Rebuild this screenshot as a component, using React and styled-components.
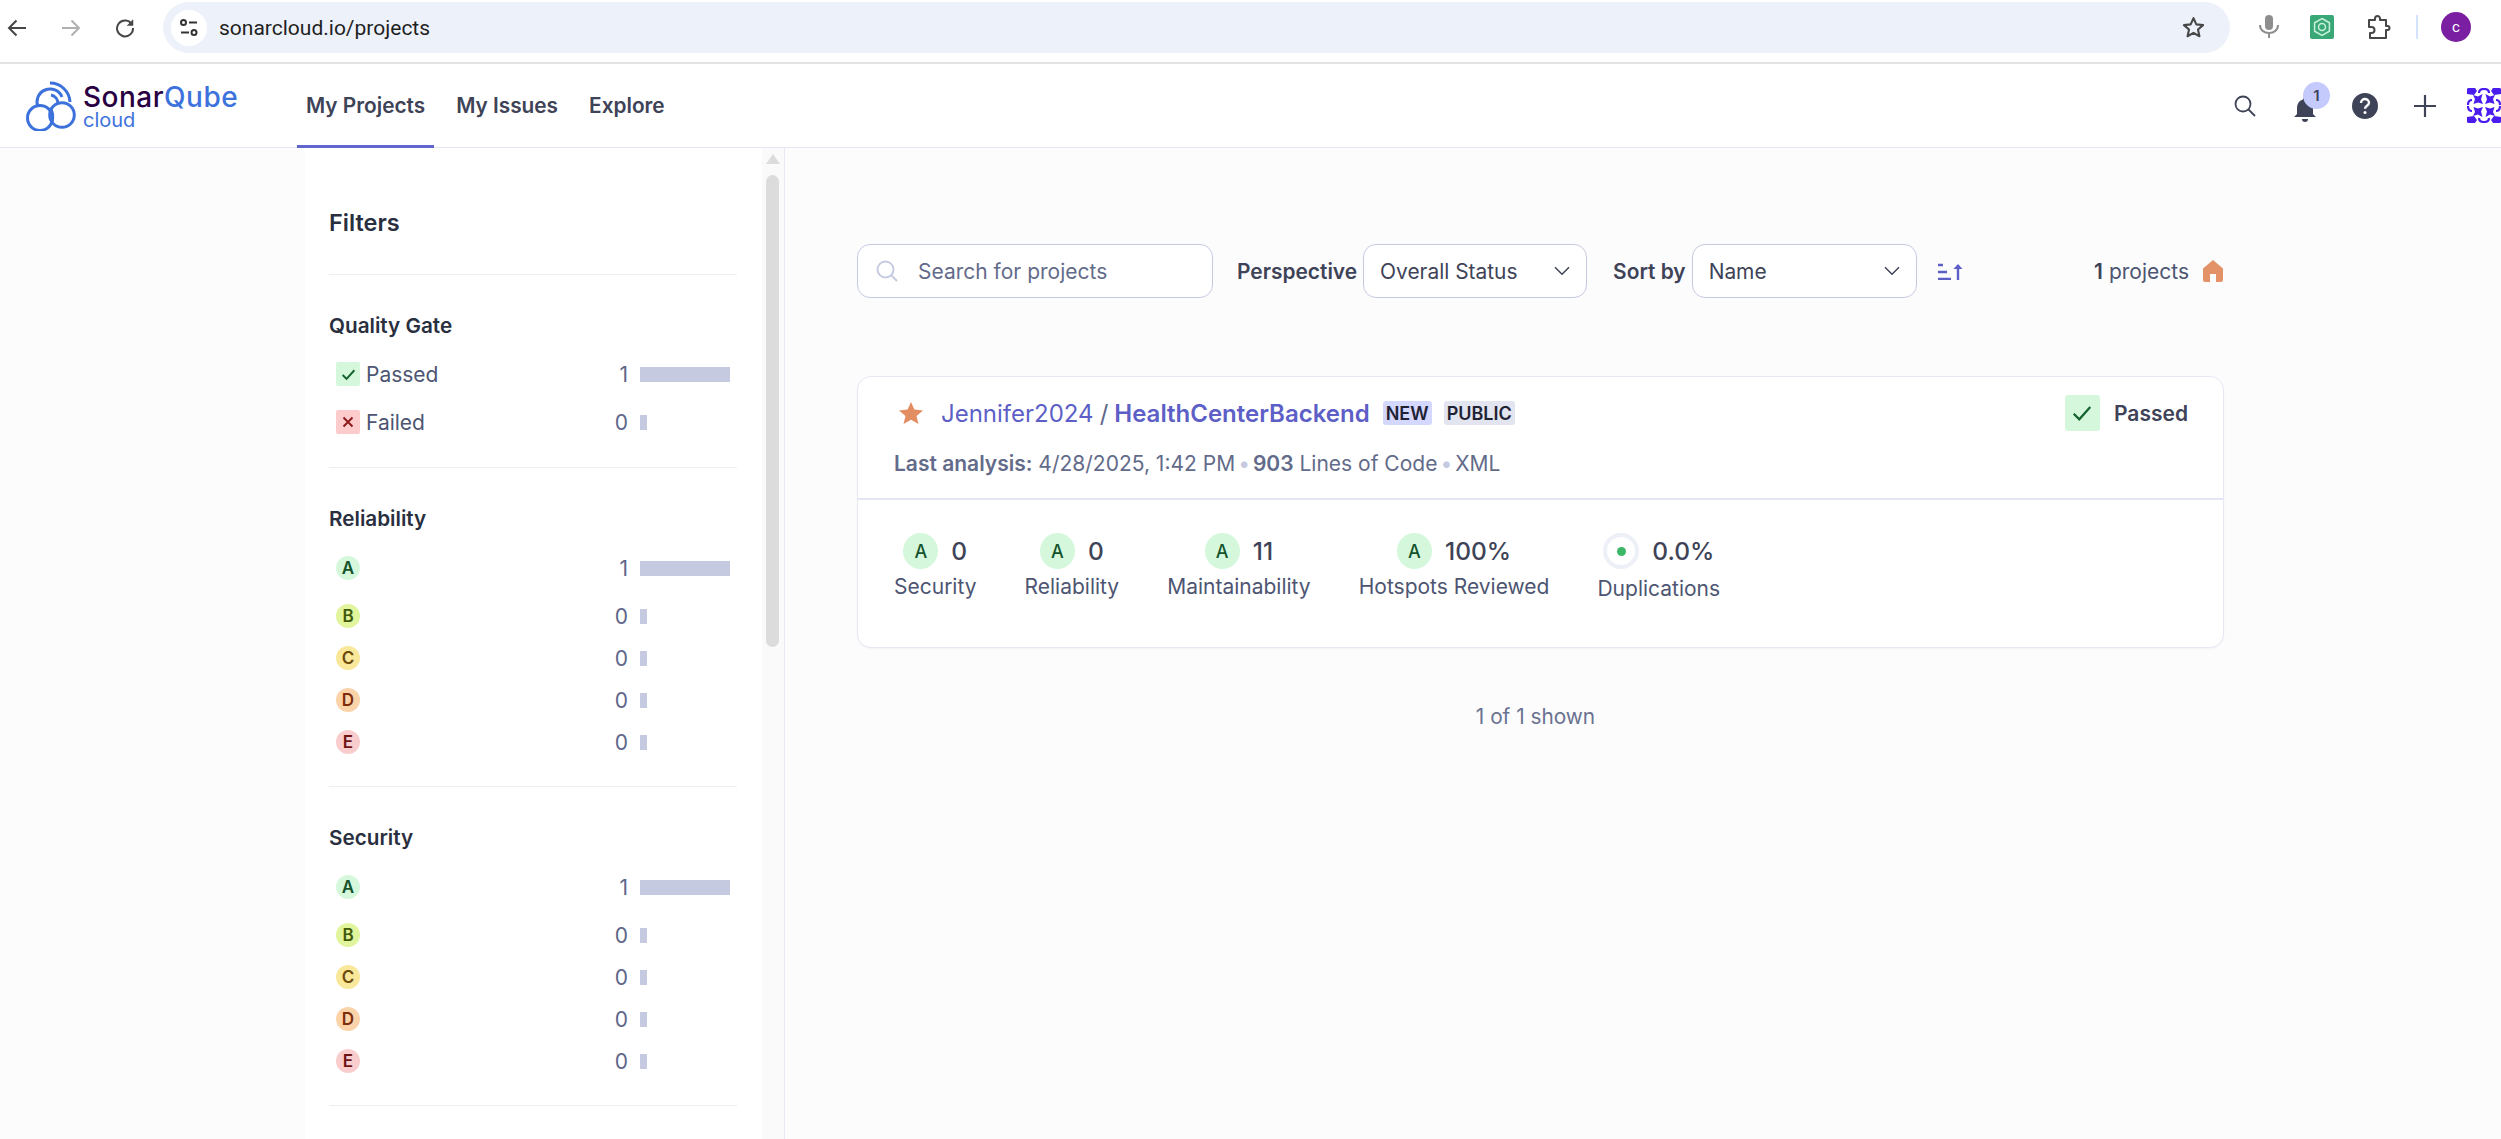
import React from "react";
import styled, { createGlobalStyle } from "styled-components";

const GlobalStyle = createGlobalStyle`
  html, body {
    margin: 0;
    height: 1139px;
    overflow: hidden;
    background: #fcfcfd;
    font-family: Inter, "Liberation Sans", sans-serif;
    color: #3e4357;
  }
  * { box-sizing: border-box; }
`;

const Page = styled.div`
  width: 2501px;
  height: 1139px;
  display: flex;
  flex-direction: column;
  overflow: hidden;
`;

/* browser chrome */
const BrowserBar = styled.div`
  height: 64px;
  flex: none;
  background: #fff;
  border-bottom: 2px solid #e3e3e3;
  display: flex;
  align-items: flex-start;
`;

const NavButton = styled.div`
  width: 54px;
  height: 56px;
  flex: none;
  display: flex;
  align-items: center;
  justify-content: center;
  margin-left: ${p => p.$first ? "-10px" : "0"};
`;

const UrlBar = styled.div`
  margin: 2px 0 0 11px;
  width: 2067px;
  height: 51px;
  border-radius: 26px;
  background: #edf2fa;
  display: flex;
  align-items: center;
  padding: 0 24px 0 8px;
`;

const SiteIcon = styled.div`
  width: 36px;
  height: 36px;
  border-radius: 50%;
  background: #fff;
  display: flex;
  align-items: center;
  justify-content: center;
`;

const UrlText = styled.span`
  margin-left: 12px;
  font-family: Roboto, sans-serif;
  font-size: 21px;
  color: #1f1f1f;
  flex: 1;
`;

const ChromeTools = styled.div`
  margin-left: 29px;
  height: 54px;
  display: flex;
  align-items: center;
`;

const ExtensionIcon = styled.div`
  width: 24px;
  height: 24px;
  border-radius: 2px;
  background: #3aa876;
  display: flex;
  align-items: center;
  justify-content: center;
  margin: 0 33px 0 31px;
`;

const ToolSeparator = styled.div`
  width: 2px;
  height: 24px;
  background: #d3e3fd;
  margin: 0 23px 0 24px;
`;

const ProfileBubble = styled.div`
  width: 30px;
  height: 30px;
  border-radius: 50%;
  background: #7b1fa2;
  color: #fff;
  font-family: Roboto, sans-serif;
  font-size: 15px;
  display: flex;
  align-items: center;
  justify-content: center;
`;

/* app header */
const Header = styled.header`
  height: 84px;
  flex: none;
  background: #fff;
  border-bottom: 1px solid #e4e6f0;
  display: flex;
  align-items: stretch;
`;

const LogoBox = styled.div`
  width: 297px;
  padding-left: 26px;
  flex: none;
  display: flex;
  align-items: center;
  gap: 5px;
`;

const LogoText = styled.div`
  display: flex;
  flex-direction: column;
  padding-top: 2px;
`;

const LogoWord = styled.div`
  font-size: 28px;
  line-height: 27px;
  font-weight: 500;
  letter-spacing: 0.5px;
  color: #290042;
  span { color: #3d72dc; }
`;

const LogoSub = styled.div`
  font-size: 20px;
  line-height: 18px;
  color: #3d72dc;
`;

const NavTabs = styled.nav`
  display: flex;
  gap: 13px;
`;

const NavTab = styled.a`
  padding: 2px 9px 0;
  font-size: 20.8px;
  font-weight: 600;
  color: #3e4357;
  display: flex;
  align-items: center;
  border-bottom: 3px solid ${p => p.$active ? "#6166cc" : "transparent"};
  margin-bottom: -1px;
`;

const HeaderTools = styled.div`
  margin-left: auto;
  display: flex;
  align-items: center;
  height: 100%;
`;

const HeaderIcon = styled.div`
  width: 60px;
  height: 40px;
  display: flex;
  align-items: center;
  justify-content: center;
  position: relative;
`;

const CountBadge = styled.span`
  position: absolute;
  top: -4px;
  right: 5px;
  width: 27px;
  height: 27px;
  border-radius: 50%;
  background: #c5cafd;
  color: #3e4357;
  font-size: 15px;
  font-weight: 600;
  display: flex;
  align-items: center;
  justify-content: center;
`;

const Identicon = styled.div`
  width: 34px;
  height: 35px;
  margin-left: 12px;
  display: flex;
`;

/* body */
const Body = styled.div`
  flex: 1;
  min-height: 0;
  display: flex;
  padding-left: 305px;
`;

const Sidebar = styled.aside`
  width: 480px;
  flex: none;
  display: flex;
  background: #fff;
  border-right: 1px solid #e6e8f4;
`;

const SidebarInner = styled.div`
  width: 457px;
  padding: 0 25px 0 24px;
  flex: none;
`;

const ScrollTrack = styled.div`
  width: 22px;
  background: #fafafa;
  padding: 6px 5px 0 4px;
  display: flex;
  flex-direction: column;
  align-items: center;
`;

const ScrollArrow = styled.div`
  width: 0;
  height: 0;
  border-left: 7px solid transparent;
  border-right: 7px solid transparent;
  border-bottom: 10px solid #dcdcdc;
`;

const ScrollThumb = styled.div`
  width: 13px;
  height: 472px;
  margin-top: 11px;
  border-radius: 7px;
  background: #dcdcdc;
`;

const FiltersTitle = styled.h2`
  margin: 0;
  padding: 60px 0 36px;
  font-size: 23.5px;
  line-height: 30px;
  font-weight: 600;
  color: #2a2f40;
  border-bottom: 1px solid #eeeff4;
`;

const FilterSection = styled.section`
  padding: 37px 0 ${p => p.$pb || 23}px;
  border-bottom: 1px solid #eeeff4;
`;

const SectionTitle = styled.h3`
  margin: 0 0 ${p => p.$gap || 14}px;
  font-size: 20.7px;
  line-height: 28px;
  font-weight: 600;
  color: #2a2f40;
`;

const FacetRow = styled.div`
  height: 42px;
  margin-top: ${p => p.$spaced ? 6 : 0}px;
  padding: 0 7px;
  display: flex;
  align-items: center;
`;

const StatusBox = styled.span`
  width: 24px;
  height: 24px;
  border-radius: 2px;
  background: ${p => p.$ok ? "#d5f8dc" : "#fccccc"};
  display: flex;
  align-items: center;
  justify-content: center;
`;

const FacetLabel = styled.span`
  margin-left: 6px;
  font-size: 21px;
  color: #4d5572;
`;

const RATING = {
  A: ["#d5f8dc", "#14532d"],
  B: ["#e0f59c", "#3f5a08"],
  C: ["#f9e79a", "#6b4a09"],
  D: ["#fad3a8", "#7c2d0a"],
  E: ["#f9cdcd", "#6f1414"],
};

const RatingDot = styled.span`
  width: 24px;
  height: 24px;
  border-radius: 50%;
  background: ${p => RATING[p.$r][0]};
  color: ${p => RATING[p.$r][1]};
  font-size: 17px;
  font-weight: 600;
  display: flex;
  align-items: center;
  justify-content: center;
`;

const FacetCount = styled.span`
  margin-left: auto;
  font-size: 21px;
  color: #5d6689;
`;

const BarSlot = styled.div`
  width: 90px;
  margin-left: 12px;
  flex: none;
`;

const FacetBar = styled.div`
  height: 15px;
  background: #c5cae0;
`;

const Content = styled.main`
  flex: 1;
  min-width: 0;
  padding: 96px 0 0 72px;
`;

const Toolbar = styled.div`
  width: 1367px;
  height: 54px;
  display: flex;
  align-items: center;
`;

const SearchBox = styled.div`
  width: 356px;
  height: 54px;
  border: 1.5px solid #c5cae0;
  border-radius: 13px;
  background: #fff;
  display: flex;
  align-items: center;
  padding-left: 18px;
  gap: 20px;
  font-size: 21px;
  color: #636b8a;
`;

const ToolLabel = styled.span`
  margin-left: ${p => p.$ml}px;
  font-size: 20.9px;
  font-weight: 600;
  color: #3e4357;
`;

const SelectBox = styled.div`
  width: ${p => p.$w}px;
  height: 54px;
  margin-left: 6px;
  border: 1.5px solid #c5cae0;
  border-radius: 13px;
  background: #fff;
  display: flex;
  align-items: center;
  justify-content: space-between;
  padding: 0 16px;
  font-size: 20.9px;
  color: #3e4357;
`;

const SortButton = styled.div`
  margin-left: 21px;
  display: flex;
`;

const ProjectCount = styled.div`
  margin-left: auto;
  display: flex;
  align-items: center;
  gap: 13px;
  font-size: 21px;
  color: #4d5572;
  strong { font-weight: 600; color: #3e4357; }
`;

const Card = styled.article`
  width: 1367px;
  height: 272px;
  margin-top: 78px;
  background: #fff;
  border: 1px solid #e6e8f4;
  border-radius: 14px;
  box-shadow: 0 1px 2px rgba(29, 33, 47, 0.04);
`;

const CardHead = styled.div`
  padding: 18px 35px 18px 36px;
  border-bottom: 2px solid #e4e6f5;
  box-sizing: content-box;
  height: 85px;
`;

const TitleRow = styled.div`
  height: 36px;
  display: flex;
  align-items: center;
  padding-left: 5px;
`;

const ProjectTitle = styled.div`
  margin-left: 18px;
  font-size: 24px;
  color: #5d5fc7;
  b { font-weight: 600; }
  i { font-style: normal; color: #5d6689; margin: 0 6px; }
`;

const Tag = styled.span`
  height: 24px;
  margin-left: ${p => p.$ml}px;
  padding: 0 3px;
  border-radius: 3px;
  background: ${p => p.$new ? "#d4d7fe" : "#e2e5f0"};
  color: #1f2233;
  font-size: 18px;
  font-weight: 600;
  display: flex;
  align-items: center;
`;

const GateStatus = styled.div`
  margin-left: auto;
  display: flex;
  align-items: center;
  gap: 14px;
  font-size: 21px;
  font-weight: 600;
  color: #3e4357;
`;

const GateBox = styled.span`
  width: 35px;
  height: 36px;
  border-radius: 3px;
  background: #d5f8dc;
  display: flex;
  align-items: center;
  justify-content: center;
`;

const MetaRow = styled.div`
  margin-top: 18px;
  line-height: 30px;
  font-size: 21px;
  color: #636b8a;
  b { font-weight: 600; }
  i { font-style: normal; color: #c5cae0; margin: 0 3px; }
`;

const Measures = styled.div`
  padding: 33px 0 0 36px;
  display: flex;
  gap: 48px;
`;

const Measure = styled.div`
  display: flex;
  flex-direction: column;
  align-items: center;
`;

const MeasureTop = styled.div`
  height: 36px;
  display: flex;
  align-items: center;
  gap: 13px;
  font-size: 24.5px;
  font-weight: 500;
  color: #3e4357;
`;

const MeasureRating = styled.span`
  width: 35px;
  height: 36px;
  border-radius: 50%;
  background: #d5f8dc;
  color: #14532d;
  font-size: 18px;
  font-weight: 500;
  display: flex;
  align-items: center;
  justify-content: center;
`;

const DupRing = styled.span`
  width: 36px;
  height: 36px;
  border-radius: 50%;
  border: 4px solid #eef0f8;
  background: #fff;
  display: flex;
  align-items: center;
  justify-content: center;
  &::after {
    content: "";
    width: 9px;
    height: 9px;
    border-radius: 50%;
    background: #3cb767;
  }
`;

const MeasureLabel = styled.span`
  margin-top: ${p => p.$low ? 6 : 4}px;
  line-height: 28px;
  font-size: 21px;
  color: #4d5572;
`;

const ShownCount = styled.div`
  width: 1367px;
  margin-top: 54px;
  padding-right: 10px;
  line-height: 30px;
  text-align: center;
  font-size: 20.8px;
  color: #6a7290;
`;

const facetRows = [
  { r: "A", n: 1 },
  { r: "B", n: 0 },
  { r: "C", n: 0 },
  { r: "D", n: 0 },
  { r: "E", n: 0 },
];

const barWidth = n => (n > 0 ? "100%" : "7px");

const Check = ({ size, w }) => (
  <svg width={size} height={size} viewBox="0 0 16 16" fill="none" stroke="#14632f" strokeWidth={w}>
    <path d="M2.5 8.5l3.7 3.7 7.3-8.2" />
  </svg>
);

const Chevron = () => (
  <svg width="16" height="10" viewBox="0 0 16 10" fill="none" stroke="#3e4357" strokeWidth="1.5">
    <path d="M1 1.2l7 7 7-7" />
  </svg>
);

const SonarLogo = () => (
  <svg width="52" height="50" viewBox="26 81 52 50" fill="none" stroke="#3d72dc" strokeWidth="3">
    <circle cx="40" cy="118" r="12.500" />
    <circle cx="62" cy="115" r="12.300" />
    <path d="M38 107A13 13 0 0 1 62 97" />
    <path d="M50 83A20 20 0 0 1 70 102" />
    <path d="M51 95A9 9 0 0 1 58 104" />
    <path d="M50 108C53 112 53 118 52 122" />
  </svg>
);

// one quarter of the avatar pattern, mirrored four times
const IdenticonQuarter = ({ transform }) => (
  <g transform={transform}>
    <path d="M1 0h7l2 3-3 4-7-1V1z" />
    <path d="M12 5c0-3 2-4 5-4" fill="none" stroke="#4a1cf0" strokeWidth="2.200" />
    <path d="M5 12c-3 0-4 2-4 5" fill="none" stroke="#4a1cf0" strokeWidth="2.200" />
    <path d="M6 7l5 1.500L15.500 6 14 11.500l2 4.500-5-1.500L6.500 16l1.500-5z" />
  </g>
);

function Facet({ label, n, spaced, children }) {
  return (
    <FacetRow $spaced={spaced}>
      {children}
      {label && <FacetLabel>{label}</FacetLabel>}
      <FacetCount>{n}</FacetCount>
      <BarSlot>
        <FacetBar style={{ width: barWidth(n) }} />
      </BarSlot>
    </FacetRow>
  );
}

function RatingSection({ title }) {
  return (
    <FilterSection>
      <SectionTitle>{title}</SectionTitle>
      {facetRows.map(f => (
        <Facet key={f.r} n={f.n} spaced={f.r === "B"}>
          <RatingDot $r={f.r}>{f.r}</RatingDot>
        </Facet>
      ))}
    </FilterSection>
  );
}

export default function App() {
  return (
    <Page>
      <GlobalStyle />
      <BrowserBar>
        <NavButton $first>
          <svg width="20" height="20" viewBox="0 0 20 20" fill="none" stroke="#474747" strokeWidth="2">
            <path d="M19 10H2M9.5 2.5L2 10l7.500 7.500" />
          </svg>
        </NavButton>
        <NavButton>
          <svg width="20" height="20" viewBox="0 0 20 20" fill="none" stroke="#b0b0b0" strokeWidth="2">
            <path d="M1 10h17M10.500 2.500L18 10l-7.500 7.500" />
          </svg>
        </NavButton>
        <NavButton>
          <svg width="20" height="20" viewBox="0 0 20 20" fill="none" stroke="#474747" strokeWidth="2">
            <path d="M17 6.500A8 8 0 1 0 18 10" />
            <path d="M18 1.500v6h-6" fill="#474747" strokeWidth="0.5" />
          </svg>
        </NavButton>
        <UrlBar>
          <SiteIcon>
            <svg width="20" height="20" viewBox="0 0 20 20" fill="none" stroke="#333" strokeWidth="2">
              <circle cx="4.500" cy="4.500" r="2.500" />
              <path d="M10 4.500h8M2 14.500h8" />
              <circle cx="15" cy="14.500" r="2.500" />
            </svg>
          </SiteIcon>
          <UrlText>sonarcloud.io/projects</UrlText>
          <svg width="25" height="25" viewBox="0 0 24 24" fill="none" stroke="#474747" strokeWidth="2" strokeLinejoin="round">
            <path d="M12 3l2.700 6 6.500.700-4.900 4.300 1.400 6.400L12 17.100 6.300 20.400l1.400-6.400-4.900-4.300 6.500-.7z" />
          </svg>
        </UrlBar>
        <ChromeTools>
          <svg width="20" height="24" viewBox="0 0 20 24" fill="none">
            <rect x="6" y="0" width="8" height="15" rx="4" fill="#8e8e8e" />
            <path d="M1 10c0 5 4 8 9 8s9-3 9-8M10 18v5" stroke="#8e8e8e" strokeWidth="2" />
          </svg>
          <ExtensionIcon>
            <svg width="20" height="20" viewBox="0 0 20 20" fill="none" stroke="#c9f0dc" strokeWidth="1.500">
              <path d="M10 1.500l7.400 4.250v8.500L10 18.500l-7.400-4.250v-8.500z" />
              <circle cx="10" cy="10" r="3.500" />
            </svg>
          </ExtensionIcon>
          <svg width="25" height="25" viewBox="0 0 25 25" fill="none" stroke="#474747" strokeWidth="2" strokeLinejoin="round">
            <path d="M2 5h6V3.500a2.500 2.500 0 0 1 5 0V5h6v6h1.500a2 2 0 0 1 0 4H19v8H3v-5h1.500a3 3 0 0 0 0-6H2z" />
          </svg>
          <ToolSeparator />
          <ProfileBubble>c</ProfileBubble>
        </ChromeTools>
      </BrowserBar>

      <Header>
        <LogoBox>
          <SonarLogo />
          <LogoText>
            <LogoWord>Sonar<span>Qube</span></LogoWord>
            <LogoSub>cloud</LogoSub>
          </LogoText>
        </LogoBox>
        <NavTabs>
          <NavTab $active>My Projects</NavTab>
          <NavTab>My Issues</NavTab>
          <NavTab>Explore</NavTab>
        </NavTabs>
        <HeaderTools>
          <HeaderIcon>
            <svg width="22" height="22" viewBox="0 0 22 22" fill="none" stroke="#3e4357" strokeWidth="1.800">
              <circle cx="9" cy="9" r="7.500" />
              <path d="M14.500 14.500L21 21" />
            </svg>
          </HeaderIcon>
          <HeaderIcon>
            <svg width="22" height="26" viewBox="0 0 22 26" fill="#3e4357" style={{ marginTop: 6 }}>
              <path d="M11 1a2 2 0 0 1 2 2v.5c4 1 6 4.500 6 8.500v6l3 3H0l3-3v-6c0-4 2-7.500 6-8.500V3a2 2 0 0 1 2-2z" />
              <path d="M8 23h6a3 3 0 0 1-6 0z" />
            </svg>
            <CountBadge>1</CountBadge>
          </HeaderIcon>
          <HeaderIcon>
            <svg width="26" height="26" viewBox="0 0 26 26">
              <circle cx="13" cy="13" r="13" fill="#3e4357" />
              <path d="M9 10c0-2.500 2-4 4-4s4 1.500 4 3.800c0 3-4 3-4 6" fill="none" stroke="#fff" strokeWidth="2.400" />
              <circle cx="13" cy="19.500" r="1.500" fill="#fff" />
            </svg>
          </HeaderIcon>
          <HeaderIcon>
            <svg width="22" height="22" viewBox="0 0 22 22" stroke="#3e4357" strokeWidth="2.200">
              <path d="M11 0v22M0 11h22" />
            </svg>
          </HeaderIcon>
          <Identicon>
            <svg width="34" height="35" viewBox="0 0 34 35" fill="#4a1cf0">
              <IdenticonQuarter />
              <IdenticonQuarter transform="matrix(-1 0 0 1 34 0)" />
              <IdenticonQuarter transform="matrix(1 0 0 -1 0 35)" />
              <IdenticonQuarter transform="matrix(-1 0 0 -1 34 35)" />
            </svg>
          </Identicon>
        </HeaderTools>
      </Header>

      <Body>
        <Sidebar>
          <SidebarInner>
            <FiltersTitle>Filters</FiltersTitle>
            <FilterSection $pb={24}>
              <SectionTitle $gap={13}>Quality Gate</SectionTitle>
              <Facet label="Passed" n={1}>
                <StatusBox $ok><Check size={17} w={1.8} /></StatusBox>
              </Facet>
              <Facet label="Failed" n={0} spaced>
                <StatusBox>
                  <svg width="12" height="12" viewBox="0 0 12 12" stroke="#8f1c1c" strokeWidth="2">
                    <path d="M1.500 1.500l9 9M10.500 1.500l-9 9" />
                  </svg>
                </StatusBox>
              </Facet>
            </FilterSection>
            <RatingSection title="Reliability" />
            <RatingSection title="Security" />
          </SidebarInner>
          <ScrollTrack>
            <ScrollArrow />
            <ScrollThumb />
          </ScrollTrack>
        </Sidebar>

        <Content>
          <Toolbar>
            <SearchBox>
              <svg width="22" height="22" viewBox="0 0 22 22" fill="none" stroke="#c5cae0" strokeWidth="2">
                <circle cx="9.500" cy="9.500" r="8" />
                <path d="M15 15l6 6" />
              </svg>
              Search for projects
            </SearchBox>
            <ToolLabel $ml={24}>Perspective</ToolLabel>
            <SelectBox $w={224}>
              Overall Status
              <Chevron />
            </SelectBox>
            <ToolLabel $ml={26}>Sort by</ToolLabel>
            <SelectBox $w={225}>
              Name
              <Chevron />
            </SelectBox>
            <SortButton>
              <svg width="25" height="17" viewBox="0 0 25 17" fill="none" stroke="#5d5fc7" strokeWidth="2.400">
                <path d="M0 2h5M0 9h9M0 16h13" />
                <path d="M20 17V2" />
                <path d="M15.500 6L20 1l4.500 5z" fill="#5d5fc7" stroke="none" />
              </svg>
            </SortButton>
            <ProjectCount>
              <span><strong>1</strong> projects</span>
              <svg width="22" height="22" viewBox="0 0 22 22" fill="#e39268">
                <path d="M11 0l10 8.500V20a2 2 0 0 1-2 2h-5v-8H8v8H3a2 2 0 0 1-2-2V8.500z" />
              </svg>
            </ProjectCount>
          </Toolbar>

          <Card>
            <CardHead>
              <TitleRow>
                <svg width="24" height="22" viewBox="0 0 24 22" fill="#e38d62">
                  <path d="M12 0l3.400 7.600 8.600.8-6.500 5.500 2 8.100L12 17.700 4.500 22l2-8.100L0 8.400l8.600-.8z" />
                </svg>
                <ProjectTitle>Jennifer2024<i>/</i><b>HealthCenterBackend</b></ProjectTitle>
                <Tag $new $ml={13}>NEW</Tag>
                <Tag $ml={12}>PUBLIC</Tag>
                <GateStatus>
                  <GateBox><Check size={24} w={1.5} /></GateBox>
                  Passed
                </GateStatus>
              </TitleRow>
              <MetaRow>
                <b>Last analysis:</b> 4/28/2025, 1:42 PM<i>•</i><b>903</b> Lines of Code<i>•</i>XML
              </MetaRow>
            </CardHead>
            <Measures>
              <Measure>
                <MeasureTop><MeasureRating>A</MeasureRating>0</MeasureTop>
                <MeasureLabel>Security</MeasureLabel>
              </Measure>
              <Measure>
                <MeasureTop><MeasureRating>A</MeasureRating>0</MeasureTop>
                <MeasureLabel>Reliability</MeasureLabel>
              </Measure>
              <Measure>
                <MeasureTop><MeasureRating>A</MeasureRating>11</MeasureTop>
                <MeasureLabel>Maintainability</MeasureLabel>
              </Measure>
              <Measure>
                <MeasureTop><MeasureRating>A</MeasureRating>100%</MeasureTop>
                <MeasureLabel>Hotspots Reviewed</MeasureLabel>
              </Measure>
              <Measure>
                <MeasureTop><DupRing />0.0%</MeasureTop>
                <MeasureLabel $low>Duplications</MeasureLabel>
              </Measure>
            </Measures>
          </Card>
          <ShownCount>1 of 1 shown</ShownCount>
        </Content>
      </Body>
    </Page>
  );
}
